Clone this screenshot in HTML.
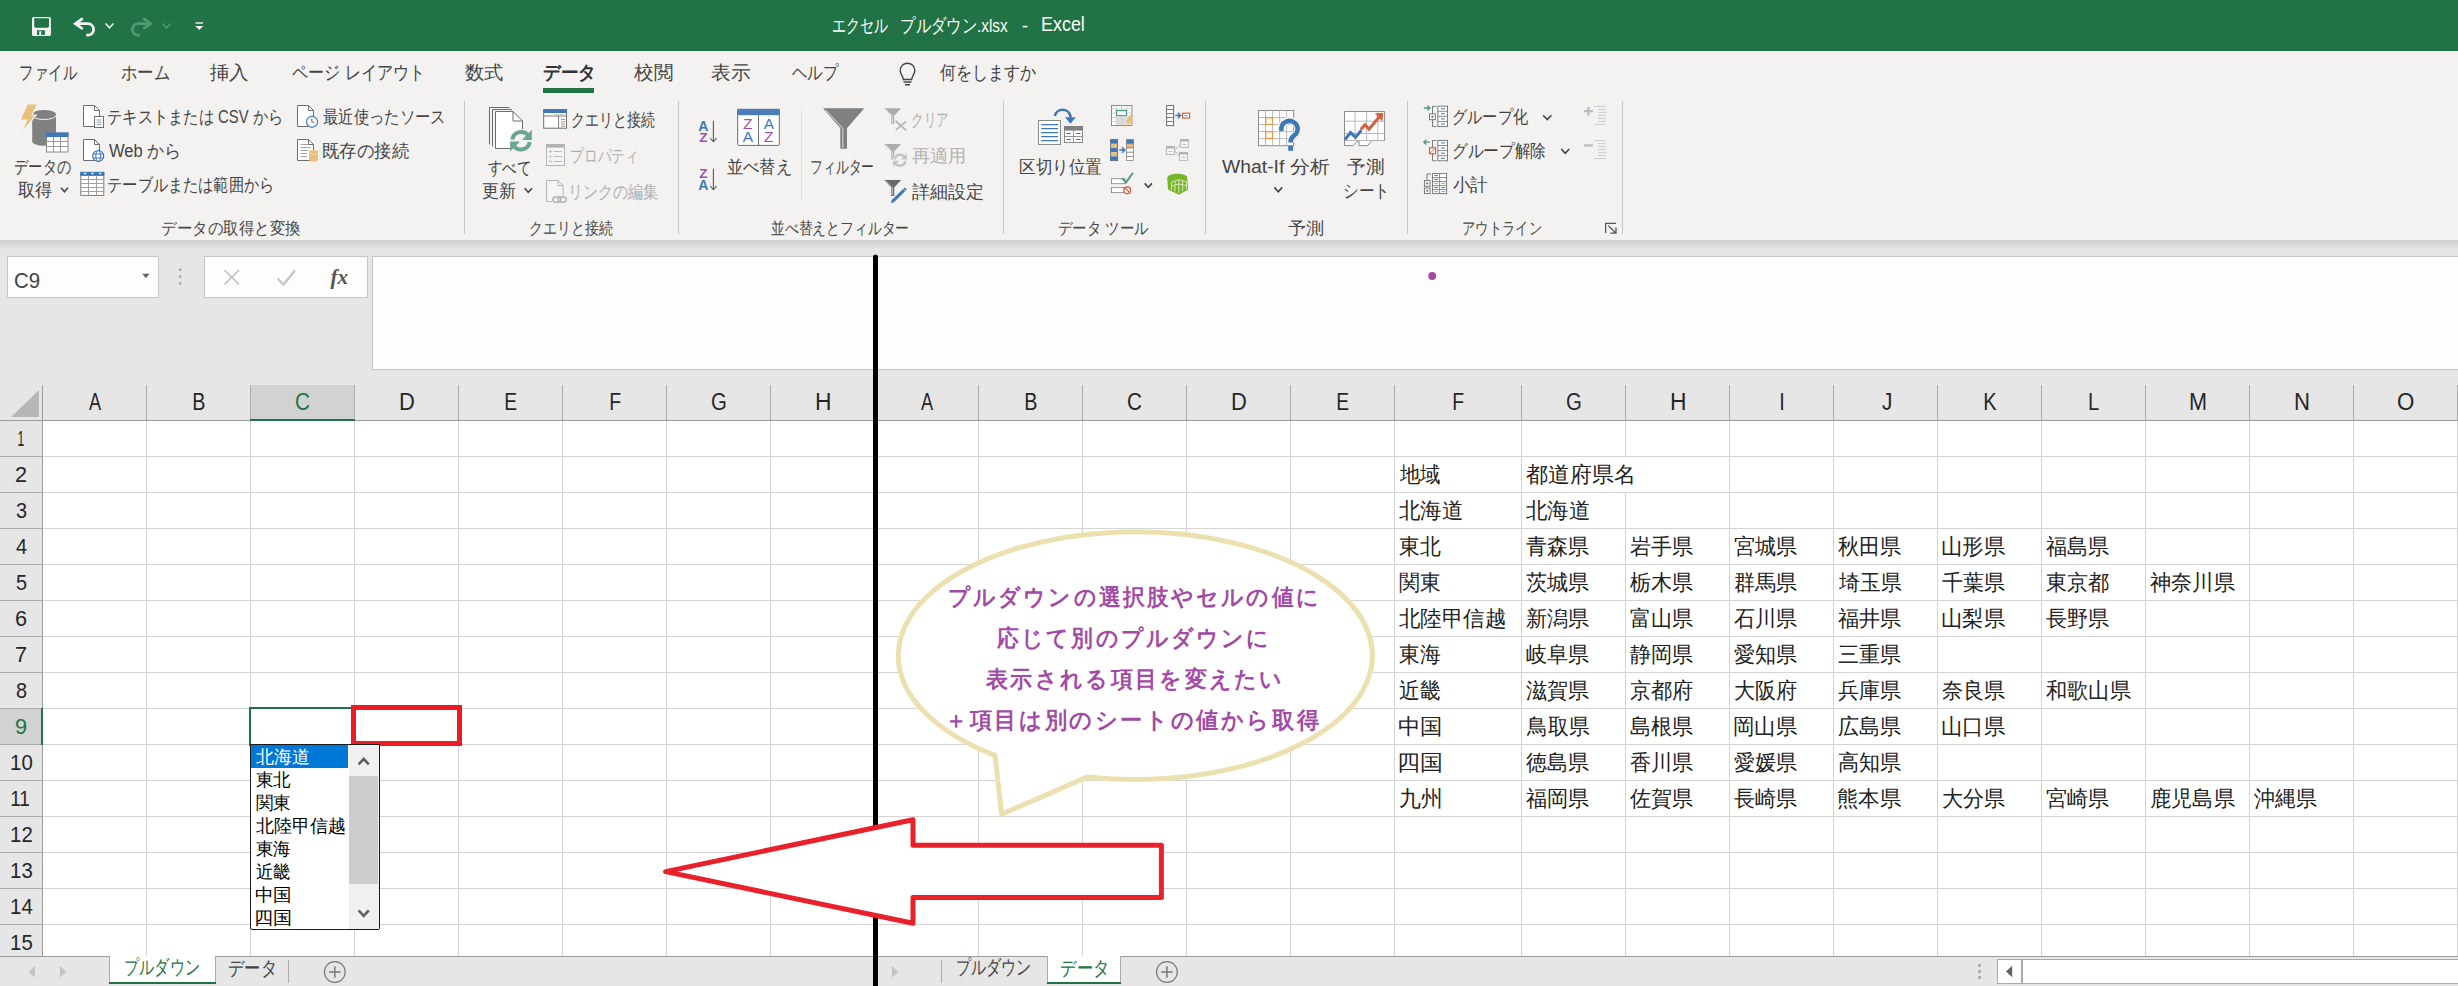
<!DOCTYPE html>
<html lang="ja"><head><meta charset="utf-8"><title>エクセル プルダウン.xlsx - Excel</title>
<style>
html,body{margin:0;padding:0;}
body{width:2458px;height:986px;overflow:hidden;background:#e6e6e6;font-family:"Liberation Sans",sans-serif;}
#root{position:relative;width:2458px;height:986px;overflow:hidden;}
.a{position:absolute;box-sizing:border-box;}
.t{position:absolute;white-space:pre;transform-origin:0 50%;font-family:"Liberation Sans",sans-serif;}
.tr{font-family:"Liberation Serif",serif;}
.tm{font-family:"Liberation Mono",monospace;}
svg{position:absolute;overflow:visible;}

</style></head>
<body>
<div id="root">
<div class="a" style="left:0px;top:0px;width:2458px;height:51px;background:#217346;"></div>
<div class="a" style="left:0px;top:51px;width:2458px;height:189px;background:#f3f2f1;"></div>
<div class="a" style="left:0px;top:240px;width:2458px;height:10px;background:linear-gradient(#cecece 0%,#d4d4d4 30%,#e2e2e2 80%,#e6e6e6 100%);"></div>
<div class="a" style="left:0px;top:250px;width:2458px;height:136px;background:#e6e6e6;"></div>
<div class="a" style="left:7px;top:256px;width:152px;height:42px;background:#fdfdfd;border:1px solid #c6c6c6;"></div>
<div class="a" style="left:204px;top:256px;width:164px;height:42px;background:#fdfdfd;border:1px solid #c6c6c6;"></div>
<div class="a" style="left:372px;top:256px;width:2086px;height:114px;background:#fdfdfd;border:1px solid #c6c6c6;border-right:none;"></div>
<div class="a" style="left:543px;top:88px;width:51px;height:5px;background:#217346;"></div>
<div class="a" style="left:464px;top:101px;width:1px;height:133px;background:#c8c6c4;"></div>
<div class="a" style="left:678px;top:101px;width:1px;height:133px;background:#c8c6c4;"></div>
<div class="a" style="left:1003px;top:101px;width:1px;height:133px;background:#c8c6c4;"></div>
<div class="a" style="left:1205px;top:101px;width:1px;height:133px;background:#c8c6c4;"></div>
<div class="a" style="left:1407px;top:101px;width:1px;height:133px;background:#c8c6c4;"></div>
<div class="a" style="left:1622px;top:101px;width:1px;height:133px;background:#c8c6c4;"></div>
<div class="a" style="left:801px;top:110px;width:1px;height:91px;background:#e1dfdd;"></div>
<div class="a" style="left:0px;top:421px;width:2458px;height:535px;background:#fff;"></div>
<div class="a" style="left:0px;top:421px;width:42px;height:535px;background:#e6e6e6;"></div>
<div class="a" style="left:43px;top:456px;width:2415px;height:1px;background:#d4d4d4;"></div>
<div class="a" style="left:0px;top:456px;width:42px;height:1px;background:#ababab;"></div>
<div class="a" style="left:43px;top:492px;width:2415px;height:1px;background:#d4d4d4;"></div>
<div class="a" style="left:0px;top:492px;width:42px;height:1px;background:#ababab;"></div>
<div class="a" style="left:43px;top:528px;width:2415px;height:1px;background:#d4d4d4;"></div>
<div class="a" style="left:0px;top:528px;width:42px;height:1px;background:#ababab;"></div>
<div class="a" style="left:43px;top:564px;width:2415px;height:1px;background:#d4d4d4;"></div>
<div class="a" style="left:0px;top:564px;width:42px;height:1px;background:#ababab;"></div>
<div class="a" style="left:43px;top:600px;width:2415px;height:1px;background:#d4d4d4;"></div>
<div class="a" style="left:0px;top:600px;width:42px;height:1px;background:#ababab;"></div>
<div class="a" style="left:43px;top:636px;width:2415px;height:1px;background:#d4d4d4;"></div>
<div class="a" style="left:0px;top:636px;width:42px;height:1px;background:#ababab;"></div>
<div class="a" style="left:43px;top:672px;width:2415px;height:1px;background:#d4d4d4;"></div>
<div class="a" style="left:0px;top:672px;width:42px;height:1px;background:#ababab;"></div>
<div class="a" style="left:43px;top:708px;width:2415px;height:1px;background:#d4d4d4;"></div>
<div class="a" style="left:0px;top:708px;width:42px;height:1px;background:#ababab;"></div>
<div class="a" style="left:43px;top:744px;width:2415px;height:1px;background:#d4d4d4;"></div>
<div class="a" style="left:0px;top:744px;width:42px;height:1px;background:#ababab;"></div>
<div class="a" style="left:43px;top:780px;width:2415px;height:1px;background:#d4d4d4;"></div>
<div class="a" style="left:0px;top:780px;width:42px;height:1px;background:#ababab;"></div>
<div class="a" style="left:43px;top:816px;width:2415px;height:1px;background:#d4d4d4;"></div>
<div class="a" style="left:0px;top:816px;width:42px;height:1px;background:#ababab;"></div>
<div class="a" style="left:43px;top:852px;width:2415px;height:1px;background:#d4d4d4;"></div>
<div class="a" style="left:0px;top:852px;width:42px;height:1px;background:#ababab;"></div>
<div class="a" style="left:43px;top:888px;width:2415px;height:1px;background:#d4d4d4;"></div>
<div class="a" style="left:0px;top:888px;width:42px;height:1px;background:#ababab;"></div>
<div class="a" style="left:43px;top:924px;width:2415px;height:1px;background:#d4d4d4;"></div>
<div class="a" style="left:0px;top:924px;width:42px;height:1px;background:#ababab;"></div>
<div class="a" style="left:146px;top:421px;width:1px;height:535px;background:#d4d4d4;"></div>
<div class="a" style="left:146px;top:385px;width:1px;height:35px;background:#ababab;"></div>
<div class="a" style="left:250px;top:421px;width:1px;height:535px;background:#d4d4d4;"></div>
<div class="a" style="left:250px;top:385px;width:1px;height:35px;background:#ababab;"></div>
<div class="a" style="left:354px;top:421px;width:1px;height:535px;background:#d4d4d4;"></div>
<div class="a" style="left:354px;top:385px;width:1px;height:35px;background:#ababab;"></div>
<div class="a" style="left:458px;top:421px;width:1px;height:535px;background:#d4d4d4;"></div>
<div class="a" style="left:458px;top:385px;width:1px;height:35px;background:#ababab;"></div>
<div class="a" style="left:562px;top:421px;width:1px;height:535px;background:#d4d4d4;"></div>
<div class="a" style="left:562px;top:385px;width:1px;height:35px;background:#ababab;"></div>
<div class="a" style="left:666px;top:421px;width:1px;height:535px;background:#d4d4d4;"></div>
<div class="a" style="left:666px;top:385px;width:1px;height:35px;background:#ababab;"></div>
<div class="a" style="left:770px;top:421px;width:1px;height:535px;background:#d4d4d4;"></div>
<div class="a" style="left:770px;top:385px;width:1px;height:35px;background:#ababab;"></div>
<div class="a" style="left:978px;top:421px;width:1px;height:535px;background:#d4d4d4;"></div>
<div class="a" style="left:978px;top:385px;width:1px;height:35px;background:#ababab;"></div>
<div class="a" style="left:1082px;top:421px;width:1px;height:535px;background:#d4d4d4;"></div>
<div class="a" style="left:1082px;top:385px;width:1px;height:35px;background:#ababab;"></div>
<div class="a" style="left:1186px;top:421px;width:1px;height:535px;background:#d4d4d4;"></div>
<div class="a" style="left:1186px;top:385px;width:1px;height:35px;background:#ababab;"></div>
<div class="a" style="left:1290px;top:421px;width:1px;height:535px;background:#d4d4d4;"></div>
<div class="a" style="left:1290px;top:385px;width:1px;height:35px;background:#ababab;"></div>
<div class="a" style="left:1394px;top:421px;width:1px;height:535px;background:#d4d4d4;"></div>
<div class="a" style="left:1394px;top:385px;width:1px;height:35px;background:#ababab;"></div>
<div class="a" style="left:1521px;top:421px;width:1px;height:535px;background:#d4d4d4;"></div>
<div class="a" style="left:1521px;top:385px;width:1px;height:35px;background:#ababab;"></div>
<div class="a" style="left:1625px;top:421px;width:1px;height:535px;background:#d4d4d4;"></div>
<div class="a" style="left:1625px;top:385px;width:1px;height:35px;background:#ababab;"></div>
<div class="a" style="left:1729px;top:421px;width:1px;height:535px;background:#d4d4d4;"></div>
<div class="a" style="left:1729px;top:385px;width:1px;height:35px;background:#ababab;"></div>
<div class="a" style="left:1833px;top:421px;width:1px;height:535px;background:#d4d4d4;"></div>
<div class="a" style="left:1833px;top:385px;width:1px;height:35px;background:#ababab;"></div>
<div class="a" style="left:1937px;top:421px;width:1px;height:535px;background:#d4d4d4;"></div>
<div class="a" style="left:1937px;top:385px;width:1px;height:35px;background:#ababab;"></div>
<div class="a" style="left:2041px;top:421px;width:1px;height:535px;background:#d4d4d4;"></div>
<div class="a" style="left:2041px;top:385px;width:1px;height:35px;background:#ababab;"></div>
<div class="a" style="left:2145px;top:421px;width:1px;height:535px;background:#d4d4d4;"></div>
<div class="a" style="left:2145px;top:385px;width:1px;height:35px;background:#ababab;"></div>
<div class="a" style="left:2249px;top:421px;width:1px;height:535px;background:#d4d4d4;"></div>
<div class="a" style="left:2249px;top:385px;width:1px;height:35px;background:#ababab;"></div>
<div class="a" style="left:2353px;top:421px;width:1px;height:535px;background:#d4d4d4;"></div>
<div class="a" style="left:2353px;top:385px;width:1px;height:35px;background:#ababab;"></div>
<div class="a" style="left:2457px;top:421px;width:1px;height:535px;background:#d4d4d4;"></div>
<div class="a" style="left:2457px;top:385px;width:1px;height:35px;background:#ababab;"></div>
<div class="a" style="left:1625px;top:457px;width:1px;height:35px;background:#fff;"></div>
<div class="a" style="left:0px;top:420px;width:2458px;height:1px;background:#9b9b9b;"></div>
<div class="a" style="left:42px;top:385px;width:1px;height:571px;background:#9b9b9b;"></div>
<svg style="left:0;top:386px" width="42" height="34"><path d="M39 4 L39 31 L11 31 Z" fill="#b7b7b7"/></svg>
<div class="a" style="left:251px;top:385px;width:103px;height:34px;background:#d2d2d2;"></div>
<div class="a" style="left:250px;top:419px;width:105px;height:2px;background:#217346;"></div>
<div class="a" style="left:0px;top:709px;width:41px;height:35px;background:#d2d2d2;"></div>
<div class="a" style="left:41px;top:708px;width:2px;height:37px;background:#217346;"></div>
<div class="a" style="left:0px;top:957px;width:2458px;height:29px;background:#e6e6e6;"></div>
<div class="a" style="left:0px;top:956px;width:2458px;height:1px;background:#9b9b9b;"></div>
<div class="a" style="left:110px;top:956px;width:106px;height:26px;background:#fff;"></div>
<div class="a" style="left:109px;top:982px;width:107px;height:2px;background:#217346;"></div>
<div class="a" style="left:109px;top:956px;width:1px;height:26px;background:#ababab;"></div>
<div class="a" style="left:215px;top:956px;width:1px;height:26px;background:#ababab;"></div>
<div class="a" style="left:288px;top:960px;width:1px;height:23px;background:#ababab;"></div>
<div class="a" style="left:1048px;top:956px;width:72px;height:26px;background:#fff;"></div>
<div class="a" style="left:1047px;top:982px;width:74px;height:2px;background:#217346;"></div>
<div class="a" style="left:1047px;top:956px;width:1px;height:26px;background:#ababab;"></div>
<div class="a" style="left:1120px;top:956px;width:1px;height:26px;background:#ababab;"></div>
<div class="a" style="left:941px;top:960px;width:1px;height:23px;background:#ababab;"></div>
<div class="a" style="left:1997px;top:959px;width:461px;height:25px;background:#fff;border:1px solid #ababab;border-right:none;"></div>
<div class="a" style="left:2021px;top:959px;width:2px;height:25px;background:#ababab;"></div>
<svg style="left:0;top:0" width="2458" height="300" viewBox="0 0 2458 300"><path d="M33.5 17 H49.4 A1.5 1.5 0 0 1 50.9 18.5 V34.5 A1.5 1.5 0 0 1 49.4 36 H33.5 A1.5 1.5 0 0 1 32 34.5 V18.5 A1.5 1.5 0 0 1 33.5 17 Z M34.2 18.2 V26.6 L35.3 27.8 H47.9 L49 26.6 V18.2 Z M37 30.2 V35 H39.2 V31.2 H41.3 V35 H44.9 V30.2 Z" fill="#f2f2f2" fill-rule="evenodd"/>
<path d="M76 23.7 H87.9 A5.75 5.75 0 0 1 87.9 35.2 H86.2" fill="none" stroke="#f2f2f2" stroke-width="2.7"/>
<path d="M82.8 18.4 L75.3 23.7 L82.8 29" fill="none" stroke="#f2f2f2" stroke-width="2.7"/>
<path d="M105.5 23.5 L109.5 27.8 L113.5 23.5" fill="none" stroke="#f2f2f2" stroke-width="1.6"/>
<path d="M150 23.7 H138.1 A5.75 5.75 0 0 0 138.1 35.2 H139.8" fill="none" stroke="#4f9a72" stroke-width="2.7"/>
<path d="M143.2 18.4 L150.7 23.7 L143.2 29" fill="none" stroke="#4f9a72" stroke-width="2.7"/>
<path d="M162.5 23.5 L166.5 27.8 L170.5 23.5" fill="none" stroke="#4f9a72" stroke-width="1.6"/>
<rect x="195.5" y="22.3" width="7.5" height="1.4" fill="#f2f2f2"/><path d="M195.2 26 H203.3 L199.25 30 Z" fill="#f2f2f2"/>
<path d="M903.3 79.5 C903.3 76 900.2 74.5 900.2 70.5 A7.3 7.3 0 0 1 914.8 70.5 C914.8 74.5 911.7 76 911.7 79.5 Z" fill="none" stroke="#444" stroke-width="1.4"/>
<path d="M903.5 82 H911.5 M905 84.8 H910" stroke="#444" stroke-width="1.4" fill="none"/>
<path d="M32.2 114.2 V141.5 A11.9 4.3 0 0 0 56 141.5 V114.2 Z" fill="#808080"/>
<ellipse cx="44.1" cy="114.2" rx="11.9" ry="4.3" fill="#808080"/>
<path d="M32.2 115.2 A11.9 4.3 0 0 0 56 115.2" fill="none" stroke="#f3f2f1" stroke-width="1"/>
<path d="M27.3 104 H37.7 L32.1 115 H36.2 L20.6 134 L26.7 120 H20 Z" fill="#eabf7c" stroke="#f3f2f1" stroke-width="1.2"/>
<rect x="46.5" y="133" width="21.5" height="19" fill="#fff" stroke="#8a8a8a" stroke-width="1"/>
<rect x="46" y="132.5" width="22.5" height="4.5" fill="#3e78b8"/>
<path d="M53.5 137 V152 M60.5 137 V152 M46.5 141.5 H68 M46.5 146.5 H68" stroke="#9a9a9a" stroke-width="1" fill="none"/>
<path d="M61 187.8 L64.5 191.8 L68 187.8" fill="none" stroke="#444" stroke-width="1.6"/>
<path d="M83.5 105.5 H94.5 L99.5 110.5 V126.5 H83.5 Z" fill="#fff" stroke="#6d6d6d" stroke-width="1"/>
<path d="M94.5 105.5 V110.5 H99.5" fill="none" stroke="#6d6d6d" stroke-width="1"/>
<rect x="94.5" y="116.5" width="9" height="11" fill="#fff" stroke="#6d6d6d" stroke-width="1"/>
<path d="M96.5 120 H101.5 M96.5 122.3 H101.5 M96.5 124.6 H101.5" stroke="#8a8a8a" stroke-width="0.9"/>
<path d="M83.5 139.5 H94.5 L99.5 144.5 V160.5 H83.5 Z" fill="#fff" stroke="#6d6d6d" stroke-width="1"/>
<path d="M94.5 139.5 V144.5 H99.5" fill="none" stroke="#6d6d6d" stroke-width="1"/>
<circle cx="98.2" cy="156" r="5.5" fill="#fff" stroke="#3e78b8" stroke-width="1.2"/>
<ellipse cx="98.2" cy="156" rx="2.4" ry="5.5" fill="none" stroke="#3e78b8" stroke-width="1"/><path d="M93 154 H103.4 M93 158 H103.4" stroke="#3e78b8" stroke-width="1"/>
<rect x="80.8" y="172.4" width="23" height="23" fill="#fff" stroke="#7a7a7a" stroke-width="1"/>
<rect x="80.3" y="171.9" width="24" height="4" fill="#3e78b8"/>
<path d="M88.5 176 V195 M96.5 176 V195 M81 179.5 H104 M81 183.5 H104 M81 187.5 H104 M81 191.5 H104" stroke="#a0a0a0" stroke-width="1" fill="none"/>
<path d="M83.5 172.8 H86.5 L85 174.8 Z M91 172.8 H94 L92.5 174.8 Z M98.8 172.8 H101.8 L100.3 174.8 Z" fill="#fff"/>
<path d="M297.5 105.5 H308.5 L313.5 110.5 V126.5 H297.5 Z" fill="#fff" stroke="#6d6d6d" stroke-width="1"/>
<path d="M308.5 105.5 V110.5 H313.5" fill="none" stroke="#6d6d6d" stroke-width="1"/>
<circle cx="312" cy="121.8" r="5.5" fill="#fff" stroke="#3e78b8" stroke-width="1.2"/><path d="M311.8 118.5 V122.2 H314.6" fill="none" stroke="#6d6d6d" stroke-width="1"/>
<path d="M297.5 139.5 H308.5 L313.5 144.5 V160.5 H297.5 Z" fill="#fff" stroke="#6d6d6d" stroke-width="1"/>
<path d="M308.5 139.5 V144.5 H313.5" fill="none" stroke="#6d6d6d" stroke-width="1"/>
<path d="M300.5 144.5 H308 M300.5 147.5 H310.5 M300.5 150.5 H308 M300.5 153.5 H307 M300.5 156.5 H307" stroke="#9a9a9a" stroke-width="0.9"/>
<path d="M309 151.7 V159.8 A4.5 1.8 0 0 0 318 159.8 V151.7 Z" fill="#eabf7c"/><ellipse cx="313.5" cy="151.7" rx="4.5" ry="1.8" fill="#eabf7c"/><path d="M309 152.6 A4.5 1.8 0 0 0 318 152.6" fill="none" stroke="#f6e3bf" stroke-width="0.8"/>
<path d="M489.5 144.5 V107.5 H509.5" fill="none" stroke="#6d6d6d" stroke-width="1"/>
<path d="M492.5 146.5 V109.5 H512" fill="none" stroke="#6d6d6d" stroke-width="1"/>
<path d="M495.5 111.5 H513.0 L522.5 121.0 V148.5 H495.5 Z" fill="#fff" stroke="#6d6d6d" stroke-width="1"/>
<path d="M513.0 111.5 V121.0 H522.5" fill="none" stroke="#6d6d6d" stroke-width="1"/>
<circle cx="521" cy="140.7" r="11.8" fill="#f3f2f1"/>
<path d="M512.4 139.5 A8.7 8.7 0 0 1 528.5 136.2" fill="none" stroke="#6aa594" stroke-width="4"/><path d="M531.8 129.8 V140 H522 Z" fill="#6aa594"/>
<path d="M529.6 141.9 A8.7 8.7 0 0 1 513.5 145.2" fill="none" stroke="#6aa594" stroke-width="4"/><path d="M510.2 151.6 V141.4 H520 Z" fill="#6aa594"/>
<path d="M524.6 188.2 L528.3 192.4 L532 188.2" fill="none" stroke="#444" stroke-width="1.6"/>
<rect x="543.7" y="109.7" width="22.8" height="18.5" fill="#fff" stroke="#6d6d6d" stroke-width="1"/><rect x="543.2" y="109.2" width="23.8" height="3.8" fill="#3e78b8"/>
<path d="M544 116 H566.5 M558.6 116 V128" stroke="#6d6d6d" stroke-width="0.9" fill="none"/>
<path d="M561 119.5 H565 M561 121.8 H565 M561 124.1 H565 M561 126.2 H565" stroke="#8a8a8a" stroke-width="0.9"/><path d="M556 114.5 H565" stroke="#8a8a8a" stroke-width="0.9" stroke-dasharray="1 1.2"/>
<rect x="546.5" y="144.5" width="18" height="21" fill="#f6f4f6" stroke="#b4b2b4" stroke-width="1"/><rect x="546" y="144" width="19" height="3.6" fill="#b4b2b4"/>
<circle cx="550.3" cy="151.5" r="1.2" fill="#b4b2b4"/><circle cx="550.3" cy="156.5" r="1.1" fill="none" stroke="#b4b2b4" stroke-width="0.7"/><circle cx="550.3" cy="161.5" r="1.1" fill="none" stroke="#b4b2b4" stroke-width="0.7"/>
<path d="M553.5 151.5 H562 M553.5 156.5 H562 M553.5 161.5 H562" stroke="#b4b2b4" stroke-width="0.9"/>
<path d="M546.5 180.5 H558 L563 185.5 V201.5 H546.5 Z" fill="#f6f4f6" stroke="#b4b2b4" stroke-width="1"/>
<path d="M558 180.5 V185.5 H563" fill="none" stroke="#b4b2b4" stroke-width="1"/>
<rect x="552" y="196" width="15.5" height="7.5" fill="#f3f2f1"/><rect x="552.8" y="197" width="8" height="5.2" rx="2.6" fill="none" stroke="#b4b2b4" stroke-width="1.5"/><rect x="558.2" y="197" width="8" height="5.2" rx="2.6" fill="none" stroke="#b4b2b4" stroke-width="1.5"/>
<text x="703.4" y="130.5" text-anchor="middle" font-family="Liberation Sans, sans-serif" font-size="14" font-weight="bold" fill="#3e78b8">A</text>
<text x="703.4" y="141.8" text-anchor="middle" font-family="Liberation Sans, sans-serif" font-size="13.5" font-weight="bold" fill="#9a4fb3">Z</text>
<path d="M713.4 121 V141.6 M710.1 138.0 L713.4 141.6 L716.6999999999999 138.0" fill="none" stroke="#5a5a5a" stroke-width="1.1"/>
<text x="703.4" y="177.8" text-anchor="middle" font-family="Liberation Sans, sans-serif" font-size="13.5" font-weight="bold" fill="#9a4fb3">Z</text>
<text x="703.4" y="189.6" text-anchor="middle" font-family="Liberation Sans, sans-serif" font-size="14" font-weight="bold" fill="#3e78b8">A</text>
<path d="M713.4 168.8 V189.6 M710.1 186.0 L713.4 189.6 L716.6999999999999 186.0" fill="none" stroke="#5a5a5a" stroke-width="1.1"/>
<rect x="737.7" y="109.4" width="41.6" height="36" fill="#fff" stroke="#6d6d6d" stroke-width="1" rx="1"/><rect x="737.2" y="108.9" width="42.6" height="6.3" fill="#4a7ebb"/><path d="M758.5 115 V145.5" stroke="#6d6d6d" stroke-width="1"/>
<text x="747.8" y="128.9" text-anchor="middle" font-family="Liberation Sans, sans-serif" font-size="15.5"  fill="#9a4fb3">Z</text>
<text x="747.8" y="142.1" text-anchor="middle" font-family="Liberation Sans, sans-serif" font-size="15.5"  fill="#3e78b8">A</text>
<text x="768.8" y="128.9" text-anchor="middle" font-family="Liberation Sans, sans-serif" font-size="15.5"  fill="#3e78b8">A</text>
<text x="768.8" y="142.1" text-anchor="middle" font-family="Liberation Sans, sans-serif" font-size="15.5"  fill="#9a4fb3">Z</text>
<path d="M823 108.2 H864.3 L847.0 128.2 V148.8 H840.3 V128.2 Z" fill="#808080"/>
<path d="M825.891 110.23 L842.846 128.5 V147.8" fill="none" stroke="#f3f2f1" stroke-width="0.83"/>
<path d="M884.2 108.2 H901.2 L894.2 115.8 V123.8 H891.2 V115.8 Z" fill="#adabad"/>
<path d="M885.3900000000001 108.98 L892.34 116.1 V122.8" fill="none" stroke="#f3f2f1" stroke-width="0.70"/>
<path d="M895.5 120.8 L906.3 130.5 M906 121.5 L895.8 130" stroke="#b0aeb0" stroke-width="1.6" fill="none"/>
<path d="M884.2 144 H901.2 L894.2 151.6 V159.6 H891.2 V151.6 Z" fill="#adabad"/>
<path d="M885.3900000000001 144.78 L892.34 151.9 V158.6" fill="none" stroke="#f3f2f1" stroke-width="0.70"/>
<circle cx="900" cy="160.2" r="7.4" fill="#f3f2f1"/>
<path d="M894.6 159.4 A5.4 5.4 0 0 1 904.6 157.4" fill="none" stroke="#c4c2c4" stroke-width="2.4"/><path d="M906.8 153.4 V159.6 H900.8 Z" fill="#c4c2c4"/>
<path d="M905.4 161 A5.4 5.4 0 0 1 895.4 163" fill="none" stroke="#c4c2c4" stroke-width="2.4"/><path d="M893.2 167 V160.8 H899.2 Z" fill="#c4c2c4"/>
<path d="M884.2 180 H901.2 L894.2 187.6 V196 H891.2 V187.6 Z" fill="#6a6a6a"/>
<path d="M885.3900000000001 180.8 L892.34 187.9 V195" fill="none" stroke="#f3f2f1" stroke-width="0.70"/>
<path d="M904.6 187.4 L906.8 189.6 L894 202.2 L890.8 203.2 L891.8 200 Z" fill="#3e78b8"/><path d="M903.2 188.8 L905.4 191" stroke="#f3f2f1" stroke-width="0.8"/>
<rect x="1038.5" y="120.5" width="22" height="24" fill="#fff" stroke="#8a8a8a" stroke-width="1"/>
<path d="M1041.2 124.6 H1058 M1041.2 128.6 H1058 M1041.2 132.6 H1058 M1041.2 136.6 H1058 M1041.2 140.6 H1058" stroke="#3e78b8" stroke-width="1.1"/>
<rect x="1064.5" y="126.5" width="18" height="16" fill="#fff" stroke="#8a8a8a" stroke-width="1"/><rect x="1064" y="126" width="19" height="4.6" fill="#808080"/><path d="M1073.5 130.5 V142.5 M1064.5 136.5 H1082.5" stroke="#8a8a8a" stroke-width="0.9"/>
<path d="M1066.5 133.5 H1071 M1076 133.5 H1080.5 M1066.5 139.5 H1071 M1076 139.5 H1080.5" stroke="#3e78b8" stroke-width="1.1"/>
<path d="M1054.8 116 A8 8 0 0 1 1070.4 116 V119" fill="none" stroke="#3e78b8" stroke-width="2.6"/><path d="M1065 117.2 H1075.8 L1070.4 123.8 Z" fill="#3e78b8"/>
<rect x="1111.5" y="105.5" width="20.4" height="20" fill="#fff" stroke="#8a8a8a" stroke-width="1"/><path d="M1116.3 105.5 V125.5 M1121.5 105.5 V125.5 M1126.7 105.5 V125.5 M1111.5 109 H1132 M1111.5 113 H1132 M1111.5 117.3 H1132 M1111.5 121.5 H1132" stroke="#c4c4c4" stroke-width="0.8"/>
<rect x="1116.5" y="118" width="9" height="6.5" fill="#d8d8d8"/><rect x="1116.5" y="110.6" width="10" height="5" fill="#fff" stroke="#4e9a7f" stroke-width="1.2"/>
<path d="M1129.7 115.1 H1133.8 L1130.8 120.4 H1133.2 L1125.2 128 L1127.9 122.3 H1125.4 Z" fill="#eabf7c"/>
<rect x="1110.6" y="139.6" width="7" height="4.2" fill="#3e78b8"/>
<rect x="1110.6" y="143.8" width="7" height="4.2" fill="#eabf7c"/>
<rect x="1110.6" y="148.0" width="7" height="4.2" fill="#3e78b8"/>
<rect x="1110.6" y="152.2" width="7" height="4.2" fill="#eabf7c"/>
<rect x="1110.6" y="156.4" width="7" height="4.2" fill="#3e78b8"/>
<rect x="1110.6" y="139.6" width="7" height="21" fill="none" stroke="#5a6e8a" stroke-width="0.9"/>
<rect x="1126.6" y="139.6" width="7" height="4.2" fill="#3e78b8" stroke="#7a7a7a" stroke-width="0.7"/>
<rect x="1126.6" y="143.8" width="7" height="4.2" fill="#eabf7c" stroke="#7a7a7a" stroke-width="0.7"/>
<rect x="1126.6" y="148.0" width="7" height="4.2" fill="#fff" stroke="#7a7a7a" stroke-width="0.7"/>
<rect x="1126.6" y="152.2" width="7" height="4.2" fill="#fff" stroke="#7a7a7a" stroke-width="0.7"/>
<rect x="1126.6" y="156.4" width="7" height="4.2" fill="#fff" stroke="#7a7a7a" stroke-width="0.7"/>
<path d="M1119.3 150 H1124.5 M1122 147.3 L1124.7 150 L1122 152.7" fill="none" stroke="#3e78b8" stroke-width="1.5"/>
<rect x="1111.5" y="178.7" width="13.4" height="5" fill="#fff" stroke="#8a8a8a" stroke-width="0.9"/><rect x="1111.5" y="187.6" width="13.4" height="5" fill="#fff" stroke="#8a8a8a" stroke-width="0.9"/>
<path d="M1122.2 178.2 L1126 182.4 L1133 172.8" fill="none" stroke="#4e9a7f" stroke-width="1.9"/>
<circle cx="1127.2" cy="190.2" r="3.4" fill="#fff" stroke="#d9532c" stroke-width="1.2"/><path d="M1124.9 187.9 L1129.5 192.5" stroke="#d9532c" stroke-width="1.1"/>
<path d="M1144.6 183.4 L1148.3 187.4 L1152 183.4" fill="none" stroke="#444" stroke-width="1.6"/>
<rect x="1166.6" y="105.6" width="7" height="20" fill="#fff" stroke="#6d6d6d" stroke-width="1"/><path d="M1166.6 109.6 H1173.6 M1166.6 113.6 H1173.6 M1166.6 117.6 H1173.6 M1166.6 121.6 H1173.6" stroke="#6d6d6d" stroke-width="0.9"/>
<path d="M1175.2 115.6 H1180.4 M1177.9 112.9 L1180.6 115.6 L1177.9 118.3" fill="none" stroke="#3e78b8" stroke-width="1.5"/>
<rect x="1182.6" y="113.2" width="7" height="4.8" fill="#fff" stroke="#d9532c" stroke-width="1.1"/><path d="M1184.6 115.6 H1187.6" stroke="#d9532c" stroke-width="0.9"/>
<path d="M1174.5 150.5 L1180.3 144 M1174.5 150.5 L1179.5 156.5" stroke="#b4b2b4" stroke-width="0.9"/>
<rect x="1166.5" y="146.5" width="8" height="8" fill="#f6f4f6" stroke="#b4b2b4" stroke-width="0.9"/><rect x="1166.1" y="146.1" width="8.8" height="2.4" fill="#b4b2b4"/><path d="M1168.5 151.5 H1172.5" stroke="#b4b2b4" stroke-width="0.8"/>
<rect x="1180.4" y="139.5" width="8" height="8" fill="#f6f4f6" stroke="#b4b2b4" stroke-width="0.9"/><rect x="1180.0" y="139.1" width="8.8" height="2.4" fill="#b4b2b4"/><path d="M1182.4 144.5 H1186.4" stroke="#b4b2b4" stroke-width="0.8"/>
<rect x="1179.5" y="152.4" width="8" height="8" fill="#f6f4f6" stroke="#b4b2b4" stroke-width="0.9"/><rect x="1179.1" y="152.0" width="8.8" height="2.4" fill="#b4b2b4"/><path d="M1181.5 157.4 H1185.5" stroke="#b4b2b4" stroke-width="0.8"/>
<path d="M1167.2 178 A10.5 4.6 0 0 1 1187 176.2 L1188.2 189.6 L1179 194.8 L1168 189.4 Z" fill="#77b52a"/>
<path d="M1171.5 182.2 L1178.8 179.6 L1186.4 181.6 M1171.5 182.2 V190 M1178.8 179.6 V193 M1186.4 181.6 V189.4 M1171.5 186 L1178.8 184 L1186.4 185.6 M1175 181 V191.5 M1182.6 180.6 V191.4" stroke="#eaf5d8" stroke-width="0.8" fill="none"/>
<rect x="1258.5" y="110.5" width="35.2" height="35.2" fill="#fff" stroke="#8a8a8a" stroke-width="1"/>
<path d="M1265.5 110.5 V145.5 M1272.6 110.5 V145.5 M1279.6 110.5 V145.5 M1286.6 110.5 V145.5 M1258.5 117.5 H1293.5 M1258.5 124.6 H1293.5 M1258.5 131.6 H1293.5 M1258.5 138.6 H1293.5" stroke="#b0b0b0" stroke-width="0.9"/>
<rect x="1265.8" y="117.8" width="6.6" height="6.6" fill="#fff" stroke="#e8923a" stroke-width="1.1"/><rect x="1265.8" y="131.8" width="6.6" height="6.6" fill="#fff" stroke="#e8923a" stroke-width="1.1"/>
<path d="M1281.2 131.4 A8.6 8.4 0 1 1 1294.2 136 C1291.6 137.8 1291 139.5 1291 142" fill="none" stroke="#f3f2f1" stroke-width="7.5"/>
<path d="M1281.6 131.2 A8.2 8 0 1 1 1294 135.6 C1291.4 137.6 1290.6 139.2 1290.6 142.4" fill="none" stroke="#3e78b8" stroke-width="4.6"/><rect x="1288.2" y="146" width="4.8" height="4.8" fill="#3e78b8"/>
<path d="M1274.4 187.4 L1278.3000000000002 191.8 L1282.2 187.4" fill="none" stroke="#444" stroke-width="1.6"/>
<path d="M1344.5 111.5 H1384.6 V140.5 H1372 L1367.5 145.6 H1359 V141 H1357.6 L1353.2 145.6 H1344.5 Z" fill="#fff" stroke="#8a8a8a" stroke-width="1"/>
<path d="M1355 111.5 V140.5 M1366.6 111.5 V140.5 M1377.8 111.5 V140.5 M1344.5 121.2 H1384.5 M1344.5 133.5 H1384.5 M1344.5 140.5 H1384.5" stroke="#b0b0b0" stroke-width="0.9" fill="none"/>
<path d="M1345 139.6 L1350.5 132.6 L1355.5 137.4 L1361.4 130.2" fill="none" stroke="#3e78b8" stroke-width="3"/>
<path d="M1360.8 129.6 L1365 124.8 L1369 129.2 L1380 116" fill="none" stroke="#d65f3e" stroke-width="3"/><path d="M1374.8 113.4 L1383.4 112.8 L1382.4 121.4 Z" fill="#d65f3e"/>
<rect x="1437.9" y="106.2" width="9.6" height="20.4" fill="#fff" stroke="#6d6d6d" stroke-width="0.9"/>
<path d="M1440.9 108.75 H1444.9" stroke="#3e78b8" stroke-width="1"/>
<path d="M1437.9 111.3 H1447.5" stroke="#6d6d6d" stroke-width="0.8"/>
<path d="M1440.9 113.85 H1444.9" stroke="#3e78b8" stroke-width="1"/>
<path d="M1437.9 116.4 H1447.5" stroke="#6d6d6d" stroke-width="0.8"/>
<path d="M1440.9 118.95 H1444.9" stroke="#3e78b8" stroke-width="1"/>
<path d="M1437.9 121.5 H1447.5" stroke="#6d6d6d" stroke-width="0.8"/>
<path d="M1440.9 124.05 H1444.9" stroke="#3e78b8" stroke-width="1"/>
<path d="M1436.4 106.3 H1432.5 V126.5 H1436.4" fill="none" stroke="#6d6d6d" stroke-width="0.9"/>
<rect x="1429.5" y="113.9" width="5.8" height="5.8" fill="#fff" stroke="#6d6d6d" stroke-width="0.9"/><path d="M1430.9 116.8 H1433.9 M1432.4 115.3 V118.3" stroke="#6d6d6d" stroke-width="0.8"/>
<path d="M1423.8 108 H1429.8 M1427.4 105.6 L1430 108 L1427.4 110.4" fill="none" stroke="#4e9a7f" stroke-width="1.3"/>
<path d="M1543.2 115.2 L1547.3000000000002 119.6 L1551.4 115.2" fill="none" stroke="#444" stroke-width="1.6"/>
<rect x="1437.9" y="140.4" width="9.6" height="20.4" fill="#fff" stroke="#6d6d6d" stroke-width="0.9"/>
<path d="M1440.9 142.95000000000002 H1444.9" stroke="#3e78b8" stroke-width="1"/>
<path d="M1437.9 145.5 H1447.5" stroke="#6d6d6d" stroke-width="0.8"/>
<path d="M1440.9 148.05 H1444.9" stroke="#3e78b8" stroke-width="1"/>
<path d="M1437.9 150.6 H1447.5" stroke="#6d6d6d" stroke-width="0.8"/>
<path d="M1440.9 153.15 H1444.9" stroke="#3e78b8" stroke-width="1"/>
<path d="M1437.9 155.70000000000002 H1447.5" stroke="#6d6d6d" stroke-width="0.8"/>
<path d="M1440.9 158.25000000000003 H1444.9" stroke="#3e78b8" stroke-width="1"/>
<path d="M1436.4 140.5 H1432.5 V160.7 H1436.4" fill="none" stroke="#6d6d6d" stroke-width="0.9"/>
<rect x="1429.5" y="147.8" width="6" height="6" fill="#fff" stroke="#d9532c" stroke-width="1.1"/><path d="M1430.4 152.9 L1434.6 148.7" stroke="#d9532c" stroke-width="0.9"/>
<path d="M1430 142.2 H1424 M1426.4 139.8 L1423.8 142.2 L1426.4 144.6" fill="none" stroke="#4e9a7f" stroke-width="1.3"/>
<path d="M1561.2 149 L1565.2 153.4 L1569.2 149" fill="none" stroke="#444" stroke-width="1.6"/>
<rect x="1432.6" y="173.6" width="14" height="20" fill="#fff" stroke="#6d6d6d" stroke-width="0.9"/><path d="M1439.6 173.6 V193.6 M1432.6 177.6 H1446.6 M1432.6 181.6 H1446.6 M1432.6 185.6 H1446.6 M1432.6 189.6 H1446.6" stroke="#6d6d6d" stroke-width="0.8"/>
<path d="M1434.3 175.6 H1438 M1434.3 179.6 H1438 M1434.3 187.6 H1438 M1441.3 187.6 H1445" stroke="#3e78b8" stroke-width="1"/><path d="M1434.3 183.6 H1438 M1441.3 183.6 H1445 M1434.3 191.6 H1438 M1441.3 191.6 H1445" stroke="#e8923a" stroke-width="1"/>
<path d="M1431 174 H1427 V180.5" fill="none" stroke="#6d6d6d" stroke-width="0.9"/>
<rect x="1424.4" y="180.6" width="5.6" height="5.6" fill="#fff" stroke="#6d6d6d" stroke-width="0.9"/><path d="M1425.8 183.4 H1428.6 M1427.2 182 V184.8" stroke="#6d6d6d" stroke-width="0.8"/>
<rect x="1424.4" y="188" width="5.6" height="5.6" fill="#fff" stroke="#6d6d6d" stroke-width="0.9"/><path d="M1425.8 190.8 H1428.6 M1427.2 189.4 V192.2" stroke="#6d6d6d" stroke-width="0.8"/>
<path d="M1584 111.2 H1593 M1588.5 106.8 V115.6" stroke="#bdbbbd" stroke-width="2.2"/>
<path d="M1594 106.4 H1606 M1598 109.4 H1606 M1598 112.4 H1606 M1598 115.4 H1606 M1598 118.4 H1606 M1598 121.4 H1606 M1594 124.4 H1606" stroke="#c8c6c8" stroke-width="0.9"/>
<path d="M1584 145.4 H1593" stroke="#bdbbbd" stroke-width="2.2"/>
<path d="M1594 140.6 H1606 M1598 143.6 H1606 M1598 146.6 H1606 M1598 149.6 H1606 M1598 152.6 H1606 M1598 155.6 H1606 M1594 158.6 H1606" stroke="#c8c6c8" stroke-width="0.9"/>
<path d="M1616 223.4 H1605.6 V233" fill="none" stroke="#555" stroke-width="1.2"/><path d="M1608.4 225.8 L1615.4 232.6 M1616 227.6 V233.2 H1610.4" fill="none" stroke="#555" stroke-width="1.3"/>
<path d="M142.2 273.8 H149.6 L145.9 278.2 Z" fill="#666"/>
<rect x="179" y="268.6" width="2.4" height="2.4" fill="#a6a6a6"/><rect x="179" y="275.4" width="2.4" height="2.4" fill="#a6a6a6"/><rect x="179" y="282.2" width="2.4" height="2.4" fill="#a6a6a6"/>
<path d="M224.5 270 L239 284.5 M239 270 L224.5 284.5" stroke="#c2c2c2" stroke-width="1.7" fill="none"/>
<path d="M277.5 278.5 L283.5 284.5 L295 270.5" stroke="#c6c6c6" stroke-width="2.4" fill="none"/>
<text x="330.5" y="284.2" font-family="Liberation Serif, serif" font-style="italic" font-weight="bold" font-size="22" fill="#555" textLength="17.5" lengthAdjust="spacingAndGlyphs">fx</text></svg>
<div class="a" style="left:249px;top:707px;width:107px;height:39px;border:2px solid #217346;"></div>
<div class="a" style="left:351px;top:705px;width:111px;height:41px;background:#fff;border:5px solid #ed1c24;"></div>
<div class="a" style="left:873px;top:257px;width:5px;height:729px;background:#000;"></div>
<svg style="left:0;top:0" width="2458" height="300" viewBox="0 0 2458 300"><circle cx="875.5" cy="257" r="2.5" fill="#000"/><circle cx="1432.2" cy="276" r="3.9" fill="#a349a4"/></svg>
<div class="a" style="left:250px;top:744px;width:130px;height:186px;background:#fff;border:1px solid #1a1a1a;border-radius:0 0 2px 2px;"></div>
<div class="a" style="left:251px;top:745px;width:97px;height:23px;background:#0078d7;"></div>
<div class="a" style="left:349px;top:745px;width:30px;height:184px;background:#f0f0f0;"></div>
<div class="a" style="left:349px;top:776px;width:29px;height:108px;background:#cdcdcd;"></div>
<svg style="left:349px;top:745px" width="30" height="184" viewBox="0 0 30 184"><path d="M9.6 19.4 L14.7 14 L19.8 19.4" fill="none" stroke="#606060" stroke-width="2.6"/><path d="M9.6 165.4 L14.7 170.8 L19.8 165.4" fill="none" stroke="#606060" stroke-width="2.6"/></svg>
<svg style="left:0;top:0" width="2458" height="986" viewBox="0 0 2458 986"><path d="M995 755.4 A237 123.8 0 1 1 1087.5 776.9 L1001.6 814.2 Z" fill="#fff" stroke="#ece0b0" stroke-width="5" stroke-linejoin="round"/>
<path d="M665.6 871.6 L913 819.8 V845.2 H1161.4 V897.6 H913 V923.2 Z" fill="#fff" stroke="#e9212a" stroke-width="5" stroke-linejoin="round"/></svg>
<svg style="left:0;top:956px" width="2458" height="30" viewBox="0 956 2458 30"><path d="M35 966 V977.6 L28.6 971.8 Z M60 966 V977.6 L66.4 971.8 Z" fill="#c3c3c3"/><circle cx="334.8" cy="972" r="10.4" fill="none" stroke="#7a7a7a" stroke-width="1.2"/><path d="M329 972 H340.6 M334.8 966.2 V977.8" stroke="#7a7a7a" stroke-width="1.5"/><path d="M892 966 V977.6 L898.4 971.8 Z" fill="#c3c3c3"/><circle cx="1166.9" cy="972" r="10.4" fill="none" stroke="#7a7a7a" stroke-width="1.2"/><path d="M1161.1 972 H1172.7 M1166.9 966.2 V977.8" stroke="#7a7a7a" stroke-width="1.5"/><rect x="1978" y="964" width="3" height="3" fill="#b0b0b0"/><rect x="1978" y="970" width="3" height="3" fill="#b0b0b0"/><rect x="1978" y="976" width="3" height="3" fill="#b0b0b0"/><path d="M2012.2 965.8 V977.2 L2006 971.5 Z" fill="#606060"/></svg>
<span class="t" style="left:833.1px;top:12.5px;font-size:19px;line-height:25px;color:#fff;transform:translateX(-0.74px) scaleX(0.7360);">エクセル</span>
<span class="t" style="left:901.4px;top:12.5px;font-size:19px;line-height:25px;color:#fff;transform:translateX(-0.81px) scaleX(0.8083);">プルダウン.xlsx</span>
<span class="t" style="left:1021.8px;top:12.5px;font-size:19px;line-height:25px;color:#fff;transform:translateX(0.00px) scaleX(1.0000);">-</span>
<span class="t" style="left:1041.8px;top:12.1px;font-size:19.5px;line-height:25px;color:#fff;transform:translateX(-0.92px) scaleX(0.9169);">Excel</span>
<span class="t" style="left:21px;top:59.9px;font-size:19px;line-height:25px;color:#444;transform:translateX(-1.51px) scaleX(0.7568);">ファイル</span>
<span class="t" style="left:121px;top:59.9px;font-size:19px;line-height:25px;color:#444;transform:translateX(0.00px) scaleX(0.8571);">ホーム</span>
<span class="t" style="left:210px;top:59.9px;font-size:19px;line-height:25px;color:#444;transform:translateX(0.00px) scaleX(1.0263);">挿入</span>
<span class="t" style="left:292px;top:59.9px;font-size:19px;line-height:25px;color:#444;transform:translateX(0.00px) scaleX(0.8449);">ページ レイアウト</span>
<span class="t" style="left:465px;top:59.9px;font-size:19px;line-height:25px;color:#444;transform:translateX(0.00px) scaleX(1.0132);">数式</span>
<span class="t" style="left:542.5px;top:59.9px;font-size:19px;line-height:25px;color:#333;font-weight:bold;transform:translateX(0.00px) scaleX(0.9273);">データ</span>
<span class="t" style="left:632.5px;top:59.9px;font-size:19px;line-height:25px;color:#444;transform:translateX(1.03px) scaleX(1.0263);">校閲</span>
<span class="t" style="left:711px;top:59.9px;font-size:19px;line-height:25px;color:#444;transform:translateX(0.00px) scaleX(1.0395);">表示</span>
<span class="t" style="left:791.5px;top:59.9px;font-size:19px;line-height:25px;color:#444;transform:translateX(0.00px) scaleX(0.8103);">ヘルプ</span>
<span class="t" style="left:939.5px;top:60.6px;font-size:18.5px;line-height:24px;color:#444;transform:translateX(0.00px) scaleX(0.8465);">何をしますか</span>
<span class="t" style="left:15px;top:156.0px;font-size:17.5px;line-height:23px;color:#444;transform:translateX(-0.79px) scaleX(0.7887);">データの</span>
<span class="t" style="left:18px;top:179.0px;font-size:17.5px;line-height:23px;color:#444;transform:translateX(0.00px) scaleX(0.9583);">取得</span>
<span class="t" style="left:108px;top:106.0px;font-size:17.5px;line-height:23px;color:#444;transform:translateX(-0.85px) scaleX(0.8476);">テキストまたは CSV から</span>
<span class="t" style="left:109px;top:140.0px;font-size:17.5px;line-height:23px;color:#444;transform:translateX(0.00px) scaleX(0.9459);">Web から</span>
<span class="t" style="left:108px;top:174.0px;font-size:17.5px;line-height:23px;color:#444;transform:translateX(-0.84px) scaleX(0.8436);">テーブルまたは範囲から</span>
<span class="t" style="left:322.5px;top:106.0px;font-size:17.5px;line-height:23px;color:#444;transform:translateX(0.00px) scaleX(0.8521);">最近使ったソース</span>
<span class="t" style="left:322.5px;top:140.0px;font-size:17.5px;line-height:23px;color:#444;transform:translateX(-0.97px) scaleX(0.9663);">既存の接続</span>
<span class="t" style="left:161px;top:218.0px;font-size:16.5px;line-height:21px;color:#484848;transform:translateX(0.00px) scaleX(0.9118);">データの取得と変換</span>
<span class="t" style="left:487.5px;top:156.5px;font-size:17.5px;line-height:23px;color:#444;transform:translateX(0.00px) scaleX(0.7981);">すべて</span>
<span class="t" style="left:482px;top:179.5px;font-size:17.5px;line-height:23px;color:#444;transform:translateX(0.00px) scaleX(0.9444);">更新</span>
<span class="t" style="left:571.5px;top:108.5px;font-size:17.5px;line-height:23px;color:#444;transform:translateX(-0.78px) scaleX(0.7757);">クエリと接続</span>
<span class="t" style="left:571px;top:145.0px;font-size:17.5px;line-height:23px;color:#b1b1b1;transform:translateX(-0.76px) scaleX(0.7616);">プロパティ</span>
<span class="t" style="left:570.5px;top:181.0px;font-size:17.5px;line-height:23px;color:#b1b1b1;transform:translateX(-3.35px) scaleX(0.8365);">リンクの編集</span>
<span class="t" style="left:530px;top:218.0px;font-size:16.5px;line-height:21px;color:#484848;transform:translateX(-0.82px) scaleX(0.8168);">クエリと接続</span>
<span class="t" style="left:726.5px;top:156.0px;font-size:17.5px;line-height:23px;color:#444;transform:translateX(0.00px) scaleX(0.9014);">並べ替え</span>
<span class="t" style="left:811px;top:156.0px;font-size:17.5px;line-height:23px;color:#444;transform:translateX(-0.71px) scaleX(0.7102);">フィルター</span>
<span class="t" style="left:911.5px;top:109.0px;font-size:17.5px;line-height:23px;color:#b1b1b1;transform:translateX(-0.69px) scaleX(0.6923);">クリア</span>
<span class="t" style="left:911.5px;top:145.0px;font-size:17.5px;line-height:23px;color:#b1b1b1;transform:translateX(0.00px) scaleX(1.0096);">再適用</span>
<span class="t" style="left:911.5px;top:181.0px;font-size:17.5px;line-height:23px;color:#444;transform:translateX(0.00px) scaleX(1.0000);">詳細設定</span>
<span class="t" style="left:771px;top:218.0px;font-size:16.5px;line-height:21px;color:#484848;transform:translateX(0.00px) scaleX(0.8136);">並べ替えとフィルター</span>
<span class="t" style="left:1019.5px;top:156.0px;font-size:17.5px;line-height:23px;color:#444;transform:translateX(-0.92px) scaleX(0.9213);">区切り位置</span>
<span class="t" style="left:1058px;top:218.0px;font-size:16.5px;line-height:21px;color:#484848;transform:translateX(0.00px) scaleX(0.8491);">データ ツール</span>
<span class="t" style="left:1222px;top:156.0px;font-size:17.5px;line-height:23px;color:#444;transform:translateX(0.00px) scaleX(1.1053);">What-If 分析</span>
<span class="t" style="left:1347px;top:156.0px;font-size:17.5px;line-height:23px;color:#444;transform:translateX(0.00px) scaleX(1.0286);">予測</span>
<span class="t" style="left:1344px;top:179.5px;font-size:17.5px;line-height:23px;color:#444;transform:translateX(-0.87px) scaleX(0.8673);">シート</span>
<span class="t" style="left:1288px;top:218.0px;font-size:16.5px;line-height:21px;color:#484848;transform:translateX(0.00px) scaleX(1.0606);">予測</span>
<span class="t" style="left:1452.5px;top:106.0px;font-size:17.5px;line-height:23px;color:#444;transform:translateX(-0.84px) scaleX(0.8427);">グループ化</span>
<span class="t" style="left:1452.5px;top:140.0px;font-size:17.5px;line-height:23px;color:#444;transform:translateX(-0.87px) scaleX(0.8692);">グループ解除</span>
<span class="t" style="left:1452.5px;top:174.0px;font-size:17.5px;line-height:23px;color:#444;transform:translateX(0.00px) scaleX(0.9722);">小計</span>
<span class="t" style="left:1463px;top:218.0px;font-size:16.5px;line-height:21px;color:#484848;transform:translateX(-0.78px) scaleX(0.7800);">アウトライン</span>
<span class="t" style="left:15px;top:265.5px;font-size:22px;line-height:29px;color:#444;transform:translateX(-0.93px) scaleX(0.9298);">C9</span>
<span class="t" style="left:88.7px;top:387.0px;font-size:23px;line-height:30px;color:#262626;transform:translateX(0.00px) scaleX(0.7875);">A</span>
<span class="t" style="left:193.0px;top:387.0px;font-size:23px;line-height:30px;color:#262626;transform:translateX(-0.86px) scaleX(0.8571);">B</span>
<span class="t" style="left:296.25px;top:387.0px;font-size:23px;line-height:30px;color:#217346;transform:translateX(-0.90px) scaleX(0.9000);">C</span>
<span class="t" style="left:399.85px;top:387.0px;font-size:23px;line-height:30px;color:#262626;transform:translateX(-0.95px) scaleX(0.9533);">D</span>
<span class="t" style="left:505.15px;top:387.0px;font-size:23px;line-height:30px;color:#262626;transform:translateX(-0.84px) scaleX(0.8357);">E</span>
<span class="t" style="left:609.5px;top:387.0px;font-size:23px;line-height:30px;color:#262626;transform:translateX(-0.85px) scaleX(0.8462);">F</span>
<span class="t" style="left:711.9px;top:387.0px;font-size:23px;line-height:30px;color:#262626;transform:translateX(-0.89px) scaleX(0.8875);">G</span>
<span class="t" style="left:816.05px;top:387.0px;font-size:23px;line-height:30px;color:#262626;transform:translateX(-0.99px) scaleX(0.9929);">H</span>
<span class="t" style="left:920.7px;top:387.0px;font-size:23px;line-height:30px;color:#262626;transform:translateX(0.00px) scaleX(0.7875);">A</span>
<span class="t" style="left:1025.0px;top:387.0px;font-size:23px;line-height:30px;color:#262626;transform:translateX(-0.86px) scaleX(0.8571);">B</span>
<span class="t" style="left:1128.25px;top:387.0px;font-size:23px;line-height:30px;color:#262626;transform:translateX(-0.90px) scaleX(0.9000);">C</span>
<span class="t" style="left:1231.85px;top:387.0px;font-size:23px;line-height:30px;color:#262626;transform:translateX(-0.95px) scaleX(0.9533);">D</span>
<span class="t" style="left:1337.15px;top:387.0px;font-size:23px;line-height:30px;color:#262626;transform:translateX(-0.84px) scaleX(0.8357);">E</span>
<span class="t" style="left:1453.0px;top:387.0px;font-size:23px;line-height:30px;color:#262626;transform:translateX(-0.85px) scaleX(0.8462);">F</span>
<span class="t" style="left:1566.9px;top:387.0px;font-size:23px;line-height:30px;color:#262626;transform:translateX(-0.89px) scaleX(0.8875);">G</span>
<span class="t" style="left:1671.05px;top:387.0px;font-size:23px;line-height:30px;color:#262626;transform:translateX(-0.99px) scaleX(0.9929);">H</span>
<span class="t" style="left:1780.7px;top:387.0px;font-size:23px;line-height:30px;color:#262626;transform:translateX(-1.73px) scaleX(0.8667);">I</span>
<span class="t" style="left:1881.5px;top:387.0px;font-size:23px;line-height:30px;color:#262626;transform:translateX(0.00px) scaleX(0.9000);">J</span>
<span class="t" style="left:1983.5px;top:387.0px;font-size:23px;line-height:30px;color:#262626;transform:translateX(-0.87px) scaleX(0.8667);">K</span>
<span class="t" style="left:2088.75px;top:387.0px;font-size:23px;line-height:30px;color:#262626;transform:translateX(-0.88px) scaleX(0.8750);">L</span>
<span class="t" style="left:2190.0px;top:387.0px;font-size:23px;line-height:30px;color:#262626;transform:translateX(-0.94px) scaleX(0.9412);">M</span>
<span class="t" style="left:2295.25px;top:387.0px;font-size:23px;line-height:30px;color:#262626;transform:translateX(-0.96px) scaleX(0.9643);">N</span>
<span class="t" style="left:2398.25px;top:387.0px;font-size:23px;line-height:30px;color:#262626;transform:translateX(-0.97px) scaleX(0.9688);">O</span>
<span class="t" style="left:17.5px;top:423.5px;font-size:22.3px;line-height:29px;color:#262626;transform:translateX(-0.55px) scaleX(0.5455);">1</span>
<span class="t" style="left:15.9px;top:459.5px;font-size:22.3px;line-height:29px;color:#262626;transform:translateX(-0.97px) scaleX(0.9727);">2</span>
<span class="t" style="left:15.9px;top:495.5px;font-size:22.3px;line-height:29px;color:#262626;transform:translateX(0.00px) scaleX(0.8917);">3</span>
<span class="t" style="left:15.9px;top:531.5px;font-size:22.3px;line-height:29px;color:#262626;transform:translateX(0.00px) scaleX(0.8917);">4</span>
<span class="t" style="left:15.9px;top:567.5px;font-size:22.3px;line-height:29px;color:#262626;transform:translateX(0.00px) scaleX(0.8917);">5</span>
<span class="t" style="left:15.9px;top:603.5px;font-size:22.3px;line-height:29px;color:#262626;transform:translateX(-0.97px) scaleX(0.9727);">6</span>
<span class="t" style="left:15.9px;top:639.5px;font-size:22.3px;line-height:29px;color:#262626;transform:translateX(-0.97px) scaleX(0.9727);">7</span>
<span class="t" style="left:15.9px;top:675.5px;font-size:22.3px;line-height:29px;color:#262626;transform:translateX(0.00px) scaleX(0.8917);">8</span>
<span class="t" style="left:15.9px;top:711.5px;font-size:22.3px;line-height:29px;color:#217346;transform:translateX(-0.97px) scaleX(0.9727);">9</span>
<span class="t" style="left:10.9px;top:747.5px;font-size:22.3px;line-height:29px;color:#262626;transform:translateX(-0.91px) scaleX(0.9145);">10</span>
<span class="t" style="left:10.9px;top:783.5px;font-size:22.3px;line-height:29px;color:#262626;transform:translateX(-0.85px) scaleX(0.8508);">11</span>
<span class="t" style="left:10.9px;top:819.5px;font-size:22.3px;line-height:29px;color:#262626;transform:translateX(-0.91px) scaleX(0.9145);">12</span>
<span class="t" style="left:10.9px;top:855.5px;font-size:22.3px;line-height:29px;color:#262626;transform:translateX(-0.91px) scaleX(0.9145);">13</span>
<span class="t" style="left:10.9px;top:891.5px;font-size:22.3px;line-height:29px;color:#262626;transform:translateX(-0.91px) scaleX(0.9145);">14</span>
<span class="t" style="left:10.9px;top:927.5px;font-size:22.3px;line-height:29px;color:#262626;transform:translateX(-0.91px) scaleX(0.9145);">15</span>
<span class="t" style="left:1399px;top:461.0px;font-size:21.5px;line-height:28px;color:#222;transform:translateX(0.93px) scaleX(0.9267);">地域</span>
<span class="t" style="left:1526px;top:461.0px;font-size:21.5px;line-height:28px;color:#222;transform:translateX(0.00px) scaleX(0.9953);">都道府県名</span>
<span class="t" style="left:1399px;top:497.0px;font-size:21.5px;line-height:28px;color:#222;transform:translateX(0.00px) scaleX(0.9738);">北海道</span>
<span class="t" style="left:1526px;top:497.0px;font-size:21.5px;line-height:28px;color:#222;transform:translateX(0.00px) scaleX(0.9738);">北海道</span>
<span class="t" style="left:1399px;top:533.0px;font-size:21.5px;line-height:28px;color:#222;transform:translateX(0.00px) scaleX(0.9477);">東北</span>
<span class="t" style="left:1526px;top:533.0px;font-size:21.5px;line-height:28px;color:#222;transform:translateX(0.00px) scaleX(0.9591);">青森県</span>
<span class="t" style="left:1630px;top:533.0px;font-size:21.5px;line-height:28px;color:#222;transform:translateX(0.00px) scaleX(0.9591);">岩手県</span>
<span class="t" style="left:1734px;top:533.0px;font-size:21.5px;line-height:28px;color:#222;transform:translateX(0.00px) scaleX(0.9591);">宮城県</span>
<span class="t" style="left:1838px;top:533.0px;font-size:21.5px;line-height:28px;color:#222;transform:translateX(0.00px) scaleX(0.9591);">秋田県</span>
<span class="t" style="left:1942px;top:533.0px;font-size:21.5px;line-height:28px;color:#222;transform:translateX(-0.97px) scaleX(0.9738);">山形県</span>
<span class="t" style="left:2046px;top:533.0px;font-size:21.5px;line-height:28px;color:#222;transform:translateX(0.00px) scaleX(0.9591);">福島県</span>
<span class="t" style="left:1399px;top:569.0px;font-size:21.5px;line-height:28px;color:#222;transform:translateX(0.00px) scaleX(0.9477);">関東</span>
<span class="t" style="left:1526px;top:569.0px;font-size:21.5px;line-height:28px;color:#222;transform:translateX(0.00px) scaleX(0.9591);">茨城県</span>
<span class="t" style="left:1630px;top:569.0px;font-size:21.5px;line-height:28px;color:#222;transform:translateX(0.00px) scaleX(0.9591);">栃木県</span>
<span class="t" style="left:1734px;top:569.0px;font-size:21.5px;line-height:28px;color:#222;transform:translateX(0.00px) scaleX(0.9591);">群馬県</span>
<span class="t" style="left:1838px;top:569.0px;font-size:21.5px;line-height:28px;color:#222;transform:translateX(0.94px) scaleX(0.9448);">埼玉県</span>
<span class="t" style="left:1942px;top:569.0px;font-size:21.5px;line-height:28px;color:#222;transform:translateX(0.00px) scaleX(0.9591);">千葉県</span>
<span class="t" style="left:2046px;top:569.0px;font-size:21.5px;line-height:28px;color:#222;transform:translateX(0.00px) scaleX(0.9591);">東京都</span>
<span class="t" style="left:2150px;top:569.0px;font-size:21.5px;line-height:28px;color:#222;transform:translateX(0.00px) scaleX(0.9648);">神奈川県</span>
<span class="t" style="left:1399px;top:605.0px;font-size:21.5px;line-height:28px;color:#222;transform:translateX(0.00px) scaleX(0.9771);">北陸甲信越</span>
<span class="t" style="left:1526px;top:605.0px;font-size:21.5px;line-height:28px;color:#222;transform:translateX(0.00px) scaleX(0.9591);">新潟県</span>
<span class="t" style="left:1630px;top:605.0px;font-size:21.5px;line-height:28px;color:#222;transform:translateX(0.00px) scaleX(0.9591);">富山県</span>
<span class="t" style="left:1734px;top:605.0px;font-size:21.5px;line-height:28px;color:#222;transform:translateX(0.00px) scaleX(0.9591);">石川県</span>
<span class="t" style="left:1838px;top:605.0px;font-size:21.5px;line-height:28px;color:#222;transform:translateX(0.00px) scaleX(0.9591);">福井県</span>
<span class="t" style="left:1942px;top:605.0px;font-size:21.5px;line-height:28px;color:#222;transform:translateX(-0.97px) scaleX(0.9738);">山梨県</span>
<span class="t" style="left:2046px;top:605.0px;font-size:21.5px;line-height:28px;color:#222;transform:translateX(0.00px) scaleX(0.9591);">長野県</span>
<span class="t" style="left:1399px;top:641.0px;font-size:21.5px;line-height:28px;color:#222;transform:translateX(0.00px) scaleX(0.9477);">東海</span>
<span class="t" style="left:1526px;top:641.0px;font-size:21.5px;line-height:28px;color:#222;transform:translateX(0.00px) scaleX(0.9591);">岐阜県</span>
<span class="t" style="left:1630px;top:641.0px;font-size:21.5px;line-height:28px;color:#222;transform:translateX(0.00px) scaleX(0.9591);">静岡県</span>
<span class="t" style="left:1734px;top:641.0px;font-size:21.5px;line-height:28px;color:#222;transform:translateX(0.00px) scaleX(0.9591);">愛知県</span>
<span class="t" style="left:1838px;top:641.0px;font-size:21.5px;line-height:28px;color:#222;transform:translateX(0.00px) scaleX(0.9591);">三重県</span>
<span class="t" style="left:1399px;top:677.0px;font-size:21.5px;line-height:28px;color:#222;transform:translateX(0.00px) scaleX(0.9477);">近畿</span>
<span class="t" style="left:1526px;top:677.0px;font-size:21.5px;line-height:28px;color:#222;transform:translateX(0.00px) scaleX(0.9591);">滋賀県</span>
<span class="t" style="left:1630px;top:677.0px;font-size:21.5px;line-height:28px;color:#222;transform:translateX(0.00px) scaleX(0.9591);">京都府</span>
<span class="t" style="left:1734px;top:677.0px;font-size:21.5px;line-height:28px;color:#222;transform:translateX(0.00px) scaleX(0.9591);">大阪府</span>
<span class="t" style="left:1838px;top:677.0px;font-size:21.5px;line-height:28px;color:#222;transform:translateX(0.00px) scaleX(0.9591);">兵庫県</span>
<span class="t" style="left:1942px;top:677.0px;font-size:21.5px;line-height:28px;color:#222;transform:translateX(0.00px) scaleX(0.9591);">奈良県</span>
<span class="t" style="left:2046px;top:677.0px;font-size:21.5px;line-height:28px;color:#222;transform:translateX(0.00px) scaleX(0.9648);">和歌山県</span>
<span class="t" style="left:1399px;top:713.0px;font-size:21.5px;line-height:28px;color:#222;transform:translateX(-1.02px) scaleX(1.0171);">中国</span>
<span class="t" style="left:1526px;top:713.0px;font-size:21.5px;line-height:28px;color:#222;transform:translateX(0.94px) scaleX(0.9448);">鳥取県</span>
<span class="t" style="left:1630px;top:713.0px;font-size:21.5px;line-height:28px;color:#222;transform:translateX(0.00px) scaleX(0.9591);">島根県</span>
<span class="t" style="left:1734px;top:713.0px;font-size:21.5px;line-height:28px;color:#222;transform:translateX(-0.97px) scaleX(0.9738);">岡山県</span>
<span class="t" style="left:1838px;top:713.0px;font-size:21.5px;line-height:28px;color:#222;transform:translateX(0.00px) scaleX(0.9591);">広島県</span>
<span class="t" style="left:1942px;top:713.0px;font-size:21.5px;line-height:28px;color:#222;transform:translateX(-0.97px) scaleX(0.9738);">山口県</span>
<span class="t" style="left:1399px;top:749.0px;font-size:21.5px;line-height:28px;color:#222;transform:translateX(-2.09px) scaleX(1.0425);">四国</span>
<span class="t" style="left:1526px;top:749.0px;font-size:21.5px;line-height:28px;color:#222;transform:translateX(0.00px) scaleX(0.9591);">徳島県</span>
<span class="t" style="left:1630px;top:749.0px;font-size:21.5px;line-height:28px;color:#222;transform:translateX(0.00px) scaleX(0.9591);">香川県</span>
<span class="t" style="left:1734px;top:749.0px;font-size:21.5px;line-height:28px;color:#222;transform:translateX(0.00px) scaleX(0.9591);">愛媛県</span>
<span class="t" style="left:1838px;top:749.0px;font-size:21.5px;line-height:28px;color:#222;transform:translateX(0.00px) scaleX(0.9591);">高知県</span>
<span class="t" style="left:1399px;top:785.0px;font-size:21.5px;line-height:28px;color:#222;transform:translateX(0.00px) scaleX(0.9929);">九州</span>
<span class="t" style="left:1526px;top:785.0px;font-size:21.5px;line-height:28px;color:#222;transform:translateX(0.00px) scaleX(0.9591);">福岡県</span>
<span class="t" style="left:1630px;top:785.0px;font-size:21.5px;line-height:28px;color:#222;transform:translateX(0.00px) scaleX(0.9591);">佐賀県</span>
<span class="t" style="left:1734px;top:785.0px;font-size:21.5px;line-height:28px;color:#222;transform:translateX(0.00px) scaleX(0.9591);">長崎県</span>
<span class="t" style="left:1838px;top:785.0px;font-size:21.5px;line-height:28px;color:#222;transform:translateX(-0.97px) scaleX(0.9738);">熊本県</span>
<span class="t" style="left:1942px;top:785.0px;font-size:21.5px;line-height:28px;color:#222;transform:translateX(0.00px) scaleX(0.9591);">大分県</span>
<span class="t" style="left:2046px;top:785.0px;font-size:21.5px;line-height:28px;color:#222;transform:translateX(0.00px) scaleX(0.9591);">宮崎県</span>
<span class="t" style="left:2150px;top:785.0px;font-size:21.5px;line-height:28px;color:#222;transform:translateX(0.00px) scaleX(0.9648);">鹿児島県</span>
<span class="t" style="left:2254px;top:785.0px;font-size:21.5px;line-height:28px;color:#222;transform:translateX(0.00px) scaleX(0.9591);">沖縄県</span>
<span class="t" style="left:124.6px;top:955.2px;font-size:19.5px;line-height:25px;color:#217346;transform:translateX(-0.76px) scaleX(0.7561);">プルダウン</span>
<span class="t" style="left:229px;top:955.5px;font-size:19.5px;line-height:25px;color:#444;transform:translateX(-0.81px) scaleX(0.8125);">データ</span>
<span class="t" style="left:956.6px;top:955.2px;font-size:19.5px;line-height:25px;color:#444;transform:translateX(-0.75px) scaleX(0.7531);">プルダウン</span>
<span class="t" style="left:1061.3px;top:955.5px;font-size:19.5px;line-height:25px;color:#217346;transform:translateX(-0.82px) scaleX(0.8161);">データ</span>
<span class="t" style="left:255.5px;top:746.0px;font-size:18px;line-height:23px;color:#fff;transform:translateX(0.00px) scaleX(1.0000);">北海道</span>
<span class="t" style="left:255.5px;top:769.0px;font-size:18px;line-height:23px;color:#000;transform:translateX(0.00px) scaleX(0.9722);">東北</span>
<span class="t" style="left:255.5px;top:792.0px;font-size:18px;line-height:23px;color:#000;transform:translateX(0.00px) scaleX(0.9722);">関東</span>
<span class="t" style="left:255.5px;top:815.0px;font-size:18px;line-height:23px;color:#000;transform:translateX(0.00px) scaleX(1.0000);">北陸甲信越</span>
<span class="t" style="left:255.5px;top:838.0px;font-size:18px;line-height:23px;color:#000;transform:translateX(0.00px) scaleX(0.9722);">東海</span>
<span class="t" style="left:255.5px;top:861.0px;font-size:18px;line-height:23px;color:#000;transform:translateX(0.00px) scaleX(0.9722);">近畿</span>
<span class="t" style="left:255.5px;top:884.0px;font-size:18px;line-height:23px;color:#000;transform:translateX(-1.03px) scaleX(1.0294);">中国</span>
<span class="t" style="left:255.5px;top:907.0px;font-size:18px;line-height:23px;color:#000;transform:translateX(-2.12px) scaleX(1.0606);">四国</span>
<span class="t tr" style="left:949px;top:582.9px;font-size:22.5px;line-height:29px;color:#a24aa6;font-weight:bold;letter-spacing:2.5px;transform:translateX(-0.95px) scaleX(0.9472);">プルダウンの選択肢やセルの値に</span>
<span class="t tr" style="left:995.7px;top:623.8px;font-size:22.5px;line-height:29px;color:#a24aa6;font-weight:bold;letter-spacing:2.5px;transform:translateX(0.95px) scaleX(0.9479);">応じて別のプルダウンに</span>
<span class="t tr" style="left:985.3px;top:664.7px;font-size:22.5px;line-height:29px;color:#a24aa6;font-weight:bold;letter-spacing:2.5px;transform:translateX(0.95px) scaleX(0.9546);">表示される項目を変えたい</span>
<span class="t tr" style="left:949.8px;top:705.8px;font-size:22.5px;line-height:29px;color:#a24aa6;font-weight:bold;letter-spacing:2.5px;transform:translateX(-4.83px) scaleX(0.9654);">＋項目は別のシートの値から取得</span>
</div>
</body></html>
